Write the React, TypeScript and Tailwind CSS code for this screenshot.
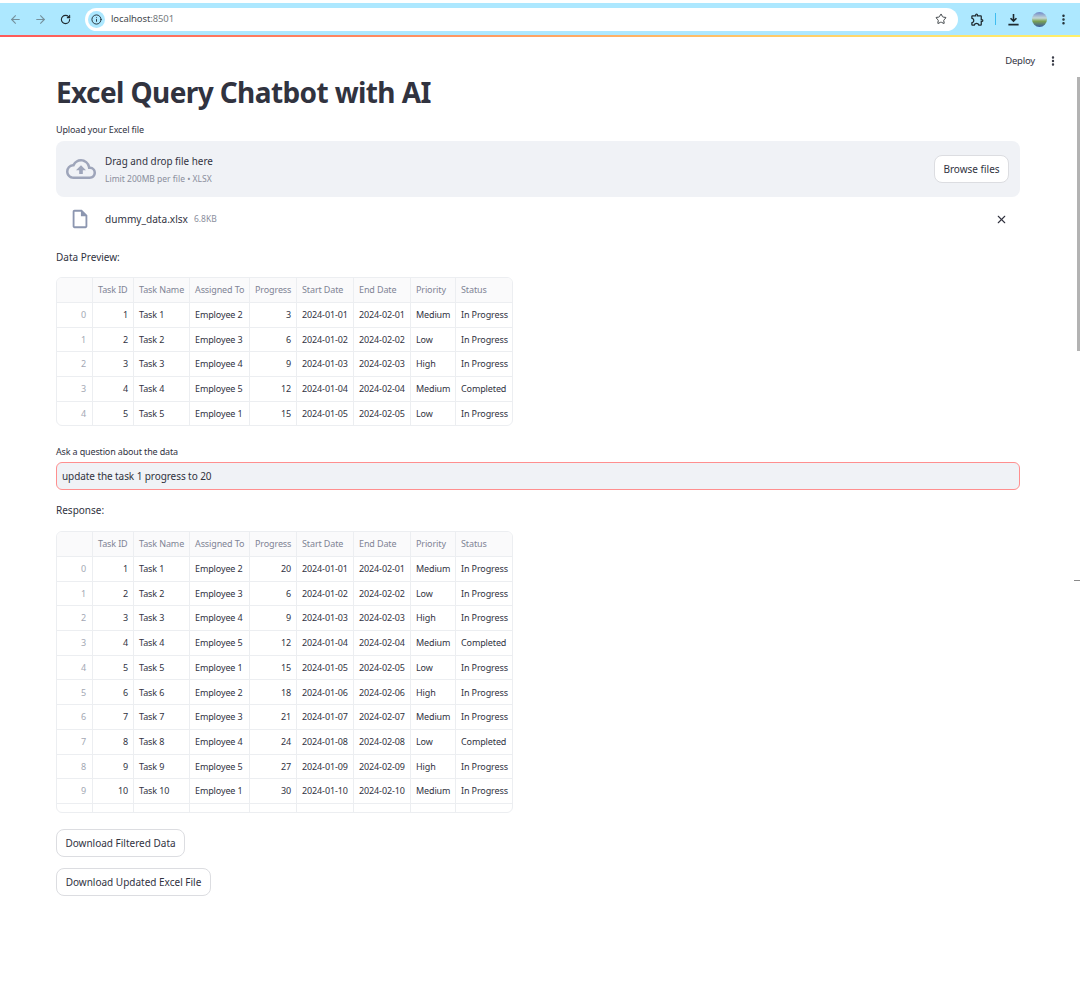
import { ArrowLeft, ArrowRight, EllipsisVertical, Info, RotateCw, Star, X } from "lucide-react";
import { MdOutlineCloudUpload, MdOutlineExtension, MdOutlineInsertDriveFile } from "react-icons/md";

const HEADERS = ["", "Task ID", "Task Name", "Assigned To", "Progress", "Start Date", "End Date", "Priority", "Status"];
const EMPLOYEES = [2, 3, 4, 5, 1, 2, 3, 4, 5, 1, 2];
const PRIORITIES = ["Medium", "Low", "High", "Medium", "Low", "High", "Medium", "Low", "High", "Medium", "Low"];
const STATUSES = [
  "In Progress",
  "In Progress",
  "In Progress",
  "Completed",
  "In Progress",
  "In Progress",
  "In Progress",
  "Completed",
  "In Progress",
  "In Progress",
  "In Progress",
];

const pad = (n: number) => String(n).padStart(2, "0");

function DataTable({ rows, firstProgress, clipped }: { rows: number; firstProgress: number; clipped?: boolean }) {
  return (
    <div
      className={`w-[457px] overflow-hidden rounded-md border border-[#eceef1] bg-white text-[9px] tracking-[-0.12px] whitespace-nowrap text-[#31333f] ${
        clipped ? "h-[282px]" : "h-[149px]"
      }`}
    >
      <div className="grid h-[25px] grid-cols-[36px_41px_56px_60px_47px_57px_57px_45px_1fr] bg-[#fafafb] text-[#808495]">
        {HEADERS.map((h, i) => (
          <div key={i} className="flex items-center border-r border-b border-[#eceef1] px-[5px] last:border-r-0">
            {h}
          </div>
        ))}
      </div>
      {Array.from({ length: rows }, (_, i) => (
        <div key={i} className="grid h-[24.7px] grid-cols-[36px_41px_56px_60px_47px_57px_57px_45px_1fr]">
          <div className="flex items-center justify-end border-r border-b border-[#eceef1] px-[6px] text-[#a3a8b4]">{i}</div>
          <div className="flex items-center justify-end border-r border-b border-[#eceef1] px-[5px]">{i + 1}</div>
          <div className="flex items-center border-r border-b border-[#eceef1] px-[5px]">Task {i + 1}</div>
          <div className="flex items-center border-r border-b border-[#eceef1] px-[5px]">Employee {EMPLOYEES[i]}</div>
          <div className="flex items-center justify-end border-r border-b border-[#eceef1] px-[5px]">
            {i === 0 ? firstProgress : (i + 1) * 3}
          </div>
          <div className="flex items-center border-r border-b border-[#eceef1] px-[5px]">2024-01-{pad(i + 1)}</div>
          <div className="flex items-center border-r border-b border-[#eceef1] px-[5px]">2024-02-{pad(i + 1)}</div>
          <div className="flex items-center border-r border-b border-[#eceef1] px-[5px]">{PRIORITIES[i]}</div>
          <div className="flex items-center border-b border-[#eceef1] px-[5px]">{STATUSES[i]}</div>
        </div>
      ))}
    </div>
  );
}

function BrowserBar() {
  return (
    <div className="pt-[3px]">
      <div className="flex h-[32px] items-center bg-[#ade8ff] pr-[10px] pl-[9px]">
        <ArrowLeft className="h-[13px] w-[13px] text-[#75909c]" />
        <ArrowRight className="ml-[12px] h-[13px] w-[13px] text-[#75909c]" />
        <RotateCw className="ml-[13px] h-[11px] w-[11px] text-[#1f2a30]" strokeWidth={2.4} />
        <div className="ml-[14px] flex h-[23px] flex-1 items-center rounded-full bg-white pl-[3px]">
          <div className="flex h-[17px] w-[17px] items-center justify-center rounded-full bg-[#ade8ff]">
            <Info className="h-[11px] w-[11px] text-[#1f2a30]" />
          </div>
          <span className="ml-[6px] text-[9.5px] tracking-[-0.1px] text-[#44494d]">
            localhost<span className="text-[#777c80]">:8501</span>
          </span>
          <Star className="mr-[11px] ml-auto h-[12px] w-[12px] text-[#3d4347]" />
        </div>
        <MdOutlineExtension className="ml-[12px] h-[15px] w-[15px] text-[#1f2a30]" />
        <div className="ml-[10px] h-[12px] w-px bg-[#3fbdf0]" />
        <svg viewBox="0 0 14 14" className="ml-[11px] h-[13px] w-[13px] text-[#1f2a30]" fill="none" stroke="currentColor" strokeWidth="1.7">
          <path d="M7 1v7.5M3.8 5.6 7 8.8l3.2-3.2M1.5 12.5h11" />
        </svg>
        <div className="ml-[12px] h-[15px] w-[15px] rounded-full bg-[linear-gradient(180deg,#6f88c8_0%,#c3d8d8_40%,#7aa252_62%,#3a5aa0_100%)]" />
        <EllipsisVertical className="ml-[10px] h-[13px] w-[13px] text-[#1f2a30]" strokeWidth={2.6} />
      </div>
      <div className="h-[2px] bg-[linear-gradient(90deg,#ff5a5a_0%,#ff8a60_35%,#ffd86a_80%,#fff06a_100%)]" />
    </div>
  );
}

export default function App() {
  return (
    <div className="relative h-[987px] w-[1080px] overflow-hidden bg-white font-['Noto_Sans',sans-serif] text-[#31333f]">
      <BrowserBar />

      {/* Streamlit toolbar */}
      <div className="flex h-[35px] items-start justify-end pt-[17px] pr-[21px] text-[9.5px] leading-[14px]">
        <span className="tracking-[-0.2px]">Deploy</span>
        <EllipsisVertical className="mt-px ml-[12px] h-[12px] w-[12px]" strokeWidth={2.8} />
      </div>

      <main className="ml-[56px] w-[964px]">
        <h1 className="text-[28px] leading-[40px] font-bold tracking-[-0.6px]">Excel Query Chatbot with AI</h1>

        <p className="mt-[11px] text-[9px] leading-[14px] tracking-[-0.14px]">Upload your Excel file</p>
        <div className="mt-[4px] flex h-[56px] items-center rounded-lg bg-[#f0f2f6] pr-[11px] pl-[10px]">
          <MdOutlineCloudUpload className="h-[30px] w-[30px] text-[#9ea5ba]" />
          <div className="ml-[9px]">
            <p className="text-[9.9px] leading-[15px]">Drag and drop file here</p>
            <p className="mt-[3px] text-[8.5px] leading-[13px] text-[#8a8e9c]">Limit 200MB per file • XLSX</p>
          </div>
          <button className="ml-auto h-[28px] w-[75px] rounded-lg border border-[#dcdde1] bg-white text-[10px]">Browse files</button>
        </div>

        <div className="flex h-[44px] items-center">
          <MdOutlineInsertDriveFile className="ml-[13px] h-[22px] w-[22px] text-[#8c96b0]" />
          <span className="ml-[14px] pt-px text-[10.1px]">dummy_data.xlsx</span>
          <span className="ml-[6px] pt-px text-[8.5px] text-[#8a8e9c]">6.8KB</span>
          <X className="mr-[12px] ml-auto h-[13px] w-[13px]" />
        </div>

        <p className="mt-[8px] text-[10px] leading-[16px]">Data Preview:</p>
        <div className="mt-[12px]">
          <DataTable rows={5} firstProgress={3} />
        </div>

        <p className="mt-[19px] text-[9px] leading-[14px] tracking-[-0.15px]">Ask a question about the data</p>
        <input
          readOnly
          value="update the task 1 progress to 20"
          className="mt-[3px] block h-[28px] w-full rounded-md border border-[#ff8f8f] bg-[#f0f2f6] px-[5px] text-[10px] tracking-[-0.08px] outline-none"
        />

        <p className="mt-[12px] text-[10px] leading-[16px]">Response:</p>
        <div className="mt-[13px]">
          <DataTable rows={11} firstProgress={20} clipped />
        </div>

        <button className="mt-[16px] block h-[28px] w-[129px] rounded-lg border border-[#dcdde1] bg-white text-[10px]">
          Download Filtered Data
        </button>
        <button className="mt-[11px] block h-[28px] w-[155px] rounded-lg border border-[#dcdde1] bg-white text-[10px]">
          Download Updated Excel File
        </button>
      </main>

      {/* page scrollbar and stray mark */}
      <div className="absolute top-[77px] right-0 h-[274px] w-[3px] bg-[#b3b3b3]" />
      <div className="absolute top-[580px] right-0 h-px w-[6px] bg-[#8a8a8a]" />
    </div>
  );
}
